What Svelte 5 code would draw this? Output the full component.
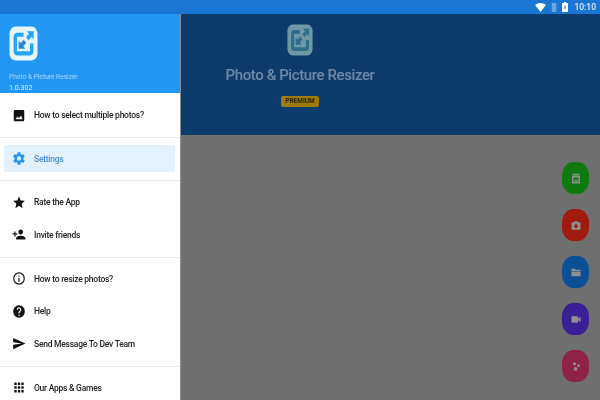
<script>
  const groups = [
    [{ icon: 'image', label: 'How to select multiple photos?' }],
    [{ icon: 'gear', label: 'Settings', active: true }],
    [
      { icon: 'star', label: 'Rate the App' },
      { icon: 'invite', label: 'Invite friends' }
    ],
    [
      { icon: 'info', label: 'How to resize photos?' },
      { icon: 'help', label: 'Help' },
      { icon: 'send', label: 'Send Message To Dev Team' }
    ],
    [{ icon: 'apps', label: 'Our Apps & Games' }]
  ];

  const paths = {
    image: 'M19 3H5a2 2 0 0 0-2 2v14a2 2 0 0 0 2 2h14a2 2 0 0 0 2-2V5a2 2 0 0 0-2-2zM6 18l3.5-4.5 2.5 3 3.5-4.5 2.5 6H6z',
    gear: 'M19.4 13c0-.3.1-.6.1-1s0-.7-.1-1l2.1-1.6c.2-.2.2-.4.1-.6l-2-3.5c-.1-.2-.4-.3-.6-.2l-2.5 1c-.5-.4-1.1-.7-1.7-1l-.4-2.6c0-.3-.2-.5-.5-.5h-4c-.3 0-.5.2-.5.4l-.4 2.7c-.6.2-1.2.6-1.7 1l-2.5-1c-.2-.1-.5 0-.6.2l-2 3.5c-.1.2-.1.5.1.6L4.6 11c0 .3-.1.6-.1 1s0 .7.1 1l-2.1 1.6c-.2.2-.2.4-.1.6l2 3.5c.1.2.4.3.6.2l2.5-1c.5.4 1.1.7 1.7 1l.4 2.6c0 .3.2.5.5.5h4c.3 0 .5-.2.5-.4l.4-2.7c.6-.2 1.2-.6 1.7-1l2.5 1c.2.1.5 0 .6-.2l2-3.5c.1-.2.1-.5-.1-.6L19.4 13zM12 15.5a3.5 3.5 0 1 1 0-7 3.5 3.5 0 0 1 0 7z',
    star: 'M12 17.3l6.2 3.7-1.6-7L22 9.2l-7.2-.6L12 2 9.2 8.6 2 9.2 7.5 14l-1.7 7z',
    invite: 'M15 12c2.2 0 4-1.8 4-4s-1.8-4-4-4-4 1.8-4 4 1.8 4 4 4zm-9-2V7H4v3H1v2h3v3h2v-3h3v-2H6zm9 4c-2.7 0-8 1.3-8 4v2h16v-2c0-2.7-5.3-4-8-4z',
    info: 'M11 7h2v2h-2zm0 4h2v6h-2zm1-9a10 10 0 1 0 0 20 10 10 0 0 0 0-20zm0 18a8 8 0 1 1 0-16 8 8 0 0 1 0 16z',
    help: 'M12 2a10 10 0 1 0 0 20 10 10 0 0 0 0-20zm1 17h-2v-2h2v2zm2.1-7.7l-.9.9c-.8.7-1.2 1.3-1.2 2.8h-2v-.5c0-1.1.4-2.1 1.2-2.8l1.2-1.3c.4-.3.6-.8.6-1.4a2 2 0 0 0-4 0H8a4 4 0 0 1 8 0c0 .9-.4 1.7-.9 2.3z',
    send: 'M2 21l21-9L2 3v7l15 2-15 2z',
    apps: 'M4 8h4V4H4v4zm6 12h4v-4h-4v4zm-6 0h4v-4H4v4zm0-6h4v-4H4v4zm6 0h4v-4h-4v4zm6-10v4h4V4h-4zm-6 4h4V4h-4v4zm6 6h4v-4h-4v4zm0 6h4v-4h-4v4z'
  };

  const fabs = [
    { color: '#0f7a10', icon: 'M5 3h14v3H5zM4 7h16v14H4zM7 10v8h10v-8zM9 16l2-3 2 2 2-3v5H9z' },
    { color: '#a11b10', icon: 'M9 4h6l1.5 2H20a1 1 0 0 1 1 1v12a1 1 0 0 1-1 1H4a1 1 0 0 1-1-1V7a1 1 0 0 1 1-1h3.5zM12 9.5a3.5 3.5 0 1 0 0 7 3.5 3.5 0 0 0 0-7z' },
    { color: '#0d4f94', icon: 'M3 5h7l2 2h9v3H3zM3 11h18v8H3z' },
    { color: '#3a1f96', icon: 'M4 6h11a1 1 0 0 1 1 1v3.5L21 7v10l-5-3.5V17a1 1 0 0 1-1 1H4a1 1 0 0 1-1-1V7a1 1 0 0 1 1-1z' },
    { color: '#8e2347', icon: 'M9 4a3 3 0 1 1 0 6 3 3 0 0 1 0-6zM17 8a2.5 2.5 0 1 1 0 5 2.5 2.5 0 0 1 0-5zM11 13a3.5 3.5 0 1 1 0 7 3.5 3.5 0 0 1 0-7z' }
  ];
</script>

{#snippet logo(w, h, frame, band, arrow)}
  <svg width={w} height={h} viewBox="0 0 30 30" preserveAspectRatio="none" class="logo">
    <rect x="0.5" y="0.5" width="29" height="29" rx="6" fill={frame} />
    <path d="M15 7.5H8.5a2 2 0 0 0-2 2V21.5a2 2 0 0 0 2 2h13a2 2 0 0 0 2-2V15" fill="none" stroke={band} stroke-width="3.6" />
    <path d="M10 19.5v-7l2.2 2.2 3-3 2.6 2.6-3 3 2.2 2.2z" fill={arrow} />
    <path d="M25.5 4.5v7l-2.2-2.2-3 3-2.6-2.6 3-3-2.2-2.2z" fill={band} />
  </svg>
{/snippet}

<div class="screen">
  <div class="statusbar">
    <svg width="11" height="9" viewBox="0 0 24 20"><path d="M12 20L0 4.5C3 2 7 0 12 0s9 2 12 4.5z" fill="#fff" /></svg>
    <svg width="6" height="9" viewBox="0 0 12 20"><rect x="1" y="0" width="10" height="20" rx="1" fill="#6aa5e3" /></svg>
    <svg width="6" height="10" viewBox="0 0 12 20"><path d="M4 0h4v2h3a1 1 0 0 1 1 1v16a1 1 0 0 1-1 1H1a1 1 0 0 1-1-1V3a1 1 0 0 1 1-1h3z" fill="#fff" /><rect x="5" y="7" width="2" height="7" fill="#1976d2" /></svg>
    <span class="time">10:10</span>
  </div>

  <div class="content">
    <nav class="drawer">
      <header class="drawer-head">
        {@render logo(29, 35, '#e6f6ff', '#25a6ee', '#1e88e5')}
        <div class="app-name">Photo &amp; Picture Resizer</div>
        <div class="version">1.0.302</div>
      </header>

      {#each groups as group, i}
        <ul class="group" class:first={i === 0}>
          {#each group as item}
            <li class="item" class:active={item.active}>
              <svg width="14" height="15" viewBox="0 0 24 24" preserveAspectRatio="none"><path d={paths[item.icon]} fill="currentColor" fill-rule="evenodd" /></svg>
              <span>{item.label}</span>
            </li>
          {/each}
        </ul>
      {/each}
    </nav>

    <main class="main">
      <section class="hero">
        {@render logo(26, 32, '#6d9aa6', '#2f6f8c', '#2f6a90')}
        <h1>Photo &amp; Picture Resizer</h1>
        <span class="premium">PREMIUM</span>
      </section>
      <div class="body">
        <div class="fabs">
          {#each fabs as fab}
            <button class="fab" style="background: {fab.color}">
              <svg width="12" height="13" viewBox="0 0 24 24" preserveAspectRatio="none"><path d={fab.icon} fill="#8f8f8f" fill-rule="evenodd" /></svg>
            </button>
          {/each}
        </div>
      </div>
    </main>
  </div>
</div>

<style>
  :global(body) {
    margin: 0;
  }

  .screen {
    width: 600px;
    height: 400px;
    overflow: hidden;
    display: flex;
    flex-direction: column;
    font-family: Roboto, "Liberation Sans", sans-serif;
    filter: blur(0.35px);
  }

  .statusbar {
    height: 14px;
    flex: none;
    background: #1976d2;
    display: flex;
    align-items: center;
    justify-content: flex-end;
    gap: 5px;
    padding-right: 4px;
  }

  .time {
    font-size: 8.5px;
    font-weight: 500;
    color: #e6f0fb;
    margin-left: 1px;
  }

  .content {
    flex: 1;
    min-height: 0;
    display: flex;
  }

  .drawer {
    width: 181px;
    flex: none;
    background: #fff;
    border-right: 1px solid #8a8f94;
    box-sizing: border-box;
  }

  .drawer-head {
    height: 79px;
    box-sizing: border-box;
    background: #2196f3;
    padding: 12px 9px 0;
  }

  .logo {
    display: block;
  }

  .app-name {
    font-size: 6.6px;
    line-height: 8px;
    margin-top: 12px;
    color: #a9d8fb;
  }

  .version {
    font-size: 7px;
    line-height: 8px;
    margin-top: 3px;
    color: #e3f3ff;
  }

  .group {
    list-style: none;
    margin: 0;
    padding: 5px 0 5.5px;
    border-top: 1px solid #e8e8e8;
  }

  .group.first {
    border-top: none;
    padding: 5.75px 0;
  }

  .item {
    height: 32.5px;
    display: flex;
    align-items: center;
    gap: 8px;
    padding-left: 12px;
    font-size: 8.5px;
    letter-spacing: -0.25px;
    font-weight: 500;
    color: #222;
  }

  .item svg {
    flex: none;
    color: #111;
  }

  .item.active {
    height: 27px;
    margin: 2px 5px 2.5px 4px;
    padding-left: 8px;
    background: #e3f1fd;
    border-radius: 3px;
    color: #4a8fd0;
  }

  .item.active svg {
    color: #2196f3;
  }

  .main {
    flex: 1;
    min-width: 0;
    display: flex;
    flex-direction: column;
  }

  .hero {
    height: 121px;
    flex: none;
    box-sizing: border-box;
    background: #0d3c6c;
    width: 100%;
    padding: 10px 181px 0 0;
    display: flex;
    flex-direction: column;
    align-items: center;
  }

  .hero h1 {
    margin: 10px 0 0;
    font-size: 15px;
    letter-spacing: -0.4px;
    font-weight: 500;
    line-height: 18px;
    color: #6f8aa6;
    white-space: nowrap;
  }

  .premium {
    margin-top: 12px;
    padding: 0 4px;
    height: 11px;
    line-height: 11px;
    border-radius: 2px;
    background: #a07a0a;
    color: #2a2408;
    font-size: 6.5px;
    font-weight: 700;
  }

  .body {
    flex: 1;
    background: #6f6f6f;
    display: flex;
    justify-content: flex-end;
    padding: 27px 11px 0 0;
  }

  .fabs {
    display: flex;
    flex-direction: column;
    gap: 15px;
  }

  .fab {
    width: 27px;
    height: 32px;
    padding: 0;
    border: none;
    border-radius: 42%;
    display: flex;
    align-items: center;
    justify-content: center;
  }
</style>
